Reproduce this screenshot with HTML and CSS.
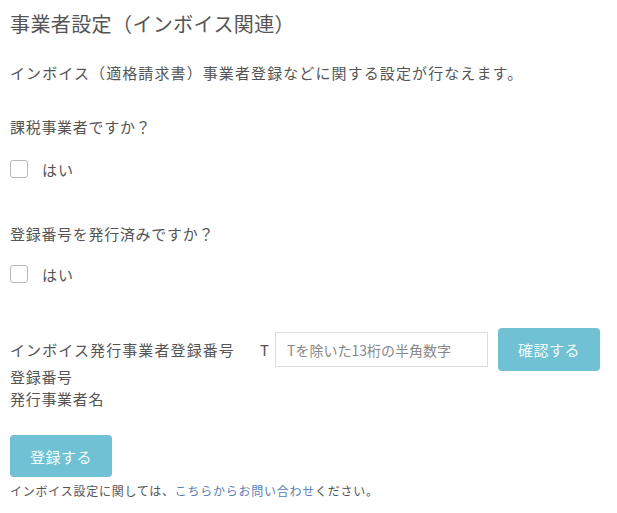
FILE: index.html
```html
<!DOCTYPE html>
<html lang="ja">
<head>
<meta charset="utf-8">
<link rel="stylesheet" href="styles.css">
</head>
<body>
<div class="page">
  <h1 class="title">事業者設定（インボイス関連）</h1>
  <p class="desc">インボイス（適格請求書）事業者登録などに関する設定が行なえます。</p>

  <div class="question">
    <p class="q-label">課税事業者ですか？</p>
    <label class="check"><span class="box"></span><span class="check-text">はい</span></label>
  </div>

  <div class="question q2">
    <p class="q-label">登録番号を発行済みですか？</p>
    <label class="check"><span class="box"></span><span class="check-text">はい</span></label>
  </div>

  <div class="reg-row">
    <span class="reg-label">インボイス発行事業者登録番号</span>
    <span class="prefix">T</span>
    <input class="reg-input" type="text" placeholder="Tを除いた13桁の半角数字">
    <button class="btn btn-confirm">確認する</button>
  </div>
  <div class="info">
    <div>登録番号</div>
    <div>発行事業者名</div>
  </div>

  <button class="btn btn-submit">登録する</button>
  <p class="note">インボイス設定に関しては、<a class="link">こちらからお問い合わせ</a>ください。</p>
</div>
</body>
</html>
```
FILE: styles.css
```css
html, body {
  margin: 0;
  padding: 0;
  background: #fff;
}
body {
  font-family: "Noto Sans CJK JP", "Noto Sans", sans-serif;
  color: #555;
}
.page {
  padding: 0 10px;
}
.title {
  margin: 0;
  padding-top: 10px;
  font-size: 20px;
  font-weight: 400;
  line-height: 28px;
  letter-spacing: 0.4px;
  color: #555;
}
.desc {
  margin: 24px 0 0;
  font-size: 15px;
  line-height: 22px;
  letter-spacing: 1.1px;
}
.question {
  margin-top: 32px;
}
.q2 {
  margin-top: 44px;
}
.q-label {
  margin: 0;
  font-size: 15px;
  line-height: 22px;
  letter-spacing: 0.7px;
}
.check {
  display: flex;
  align-items: center;
  margin-top: 21px;
  height: 20px;
}
.q2 .check {
  margin-top: 19px;
}
.box {
  width: 16px;
  height: 16px;
  border: 1.5px solid #b8b8b8;
  border-radius: 3px;
  box-sizing: content-box;
}
.check-text {
  margin-left: 14px;
  font-size: 15px;
  letter-spacing: 1px;
}
.reg-row {
  display: flex;
  align-items: center;
  margin-top: 44px;
}
.reg-label {
  font-size: 15px;
  letter-spacing: 1.1px;
  width: 250px;
}
.prefix {
  font-size: 15px;
  width: 15px;
}
.reg-input {
  width: 213px;
  height: 35px;
  box-sizing: border-box;
  border: 1px solid #ddd;
  padding: 0 11px;
  font-family: "Noto Sans CJK JP", sans-serif;
  font-size: 14px;
  color: #555;
  outline: none;
}
.reg-input::placeholder {
  color: #888;
}
.btn {
  border: none;
  border-radius: 4px;
  background: #6fc1d3;
  color: #f2fbfd;
  font-family: "Noto Sans CJK JP", sans-serif;
  font-size: 15px;
  letter-spacing: 0.5px;
  cursor: pointer;
}
.btn-confirm {
  margin-left: 10px;
  width: 102px;
  height: 43px;
}
.info {
  margin-top: -5px;
  font-size: 15px;
  line-height: 22px;
  letter-spacing: 0.7px;
}
.btn-submit {
  display: block;
  margin-top: 25px;
  width: 102px;
  height: 42px;
}
.note {
  margin: 6px 0 0;
  font-size: 12px;
  line-height: 16px;
  letter-spacing: 0.75px;
  color: #555;
}
.link {
  color: #5a7fb5;
  text-decoration: none;
}
```
